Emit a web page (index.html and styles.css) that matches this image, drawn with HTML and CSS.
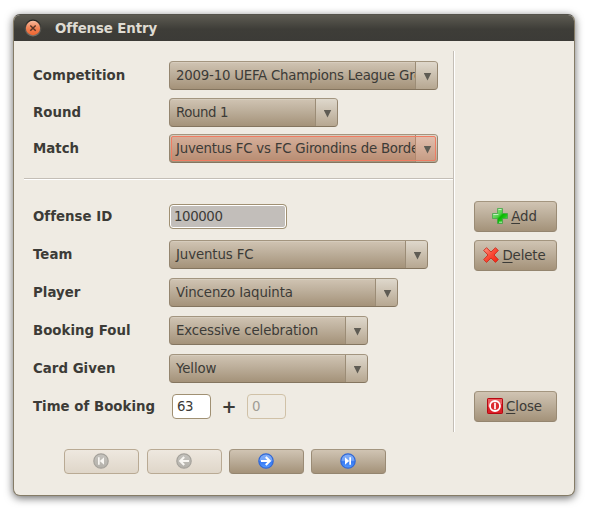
FILE: index.html
```html
<!DOCTYPE html>
<html lang="en">
<head>
<meta charset="utf-8">
<title>Offense Entry</title>
<link rel="stylesheet" href="styles.css">
</head>
<body>
<main class="window">
  <header class="titlebar">
    <svg class="window-close" width="18" height="18" viewBox="0 0 18 18">
      <defs><linearGradient id="orb" x1="0" y1="0" x2="0" y2="1"><stop offset="0" stop-color="#f7b99c"/><stop offset=".5" stop-color="#f18255"/><stop offset="1" stop-color="#ee6530"/></linearGradient>
      <linearGradient id="ring" x1="0" y1="0" x2="0" y2="1"><stop offset="0" stop-color="#20201d"/><stop offset="1" stop-color="#77756d"/></linearGradient></defs>
      <circle cx="9" cy="9" r="8.5" fill="url(#ring)"/><circle cx="9" cy="9" r="7.2" fill="url(#orb)"/>
      <path d="M6.3 6.5l5.4 5.2M11.7 6.5l-5.4 5.2" stroke="#5a3526" stroke-width="1.5"/>
    </svg>
    <h1 class="title">Offense Entry</h1>
  </header>
  <div class="content">
    <form class="form">
      <section class="match-fields">
        <div class="row"><label class="label">Competition</label><div class="combo w269"><span class="value long">2009-10 UEFA Champions League Group</span><span class="drop"><i class="arrow"></i></span></div></div>
        <div class="row"><label class="label">Round</label><div class="combo w169"><span class="value short">Round 1</span><span class="drop"><i class="arrow"></i></span></div></div>
        <div class="row row-match"><label class="label">Match</label><div class="combo w269 focused"><span class="value long">Juventus FC vs FC Girondins de Bordeaux</span><span class="drop"><i class="arrow"></i></span></div></div>
      </section>
      <section class="offense-fields">
        <div class="row"><label class="label">Offense ID</label><span class="entry readonly">100000</span></div>
        <div class="row"><label class="label">Team</label><div class="combo w259"><span class="value">Juventus FC</span><span class="drop"><i class="arrow"></i></span></div></div>
        <div class="row"><label class="label">Player</label><div class="combo w229"><span class="value">Vincenzo Iaquinta</span><span class="drop"><i class="arrow"></i></span></div></div>
        <div class="row"><label class="label">Booking Foul</label><div class="combo w199"><span class="value">Excessive celebration</span><span class="drop"><i class="arrow"></i></span></div></div>
        <div class="row"><label class="label">Card Given</label><div class="combo w199"><span class="value">Yellow</span><span class="drop"><i class="arrow"></i></span></div></div>
        <div class="row"><label class="label">Time of Booking</label><span class="entry minute">63</span><span class="plus">+</span><span class="entry minute disabled">0</span></div>
      </section>
    </form>
    <aside class="actions">
      <button class="button action add"><svg width="16" height="16" viewBox="0 0 16 16">
        <defs><linearGradient id="green" x1="0" y1="0" x2="1" y2="1"><stop offset="0" stop-color="#a8eaa2"/><stop offset=".45" stop-color="#4fd046"/><stop offset=".55" stop-color="#08b900"/><stop offset=".7" stop-color="#22c41a"/><stop offset="1" stop-color="#9be895"/></linearGradient></defs>
        <path d="M5.5.5h5v5h5v5h-5v5h-5v-5h-5v-5h5z" fill="url(#green)" stroke="#3fa045" stroke-width=".7"/><path d="M6.5 1.5h3M1.4 6.5h5M7 14.2h3" stroke="#d8f7d5" opacity=".8"/></svg><span><u>A</u>dd</span></button>
      <button class="button action delete"><svg width="16" height="16" viewBox="0 0 16 16">
        <defs><linearGradient id="red" x1="0" y1="0" x2="1" y2="1"><stop offset="0" stop-color="#ff9a88"/><stop offset=".5" stop-color="#fa4934"/><stop offset="1" stop-color="#f52211"/></linearGradient></defs>
        <path d="M3.5.7L8 5 12.5.7l2.8 2.8L11 8l4.3 4.6-2.8 2.8L8 11l-4.5 4.4-2.8-2.8L5 8 .7 3.5z" fill="url(#red)" stroke="#cb2b1d" stroke-width=".9" stroke-linejoin="round"/></svg><span><u>D</u>elete</span></button>
      <button class="button action close"><svg width="16" height="16" viewBox="0 0 16 16">
        <rect x=".5" y=".5" width="15" height="15" rx=".7" fill="#dc2027" stroke="#b50811"/><path d="M1 1h14v5Q8 5 1 9z" fill="#f17b7b" opacity=".65"/><circle cx="8" cy="8" r="5" fill="#dc2c30" stroke="#fff" stroke-width="1.8"/><path d="M8 4.8v6.4" stroke="#fff" stroke-width="1.7"/></svg><span><u>C</u>lose</span></button>
    </aside>
  </div>
  <nav class="pager">
    <svg class="defs" width="0" height="0"><defs>
      <linearGradient id="blue" x1="0" y1="0" x2="0" y2="1"><stop offset="0" stop-color="#82adf7"/><stop offset=".45" stop-color="#73a4f8"/><stop offset=".55" stop-color="#3478f4"/><stop offset="1" stop-color="#579cff"/></linearGradient>
      <linearGradient id="gray" x1="0" y1="0" x2="0" y2="1"><stop offset="0" stop-color="#c5c3be"/><stop offset="1" stop-color="#b4b1aa"/></linearGradient></defs></svg>
    <button class="button page inactive"><svg width="16" height="16" viewBox="0 0 16 16"><circle cx="8" cy="8" r="7.2" fill="url(#gray)" stroke="#a5a29b" stroke-width="1.2"/><path d="M5 4.2h1.7v7.6H5zM11 4.2v7.6L6.8 8z" fill="#f8f6f2"/></svg></button>
    <button class="button page inactive"><svg width="16" height="16" viewBox="0 0 16 16"><circle cx="8" cy="8" r="7.2" fill="url(#gray)" stroke="#a5a29b" stroke-width="1.2"/><path d="M13 8H4.5M8.2 4L4.2 8l4 4" fill="none" stroke="#f8f6f2" stroke-width="2.1"/></svg></button>
    <button class="button page"><svg width="16" height="16" viewBox="0 0 16 16"><circle cx="8" cy="8" r="7.2" fill="url(#blue)" stroke="#3168d5" stroke-width="1.2"/><path d="M3 8h8.5M7.8 4l4 4-4 4" fill="none" stroke="#fff" stroke-width="2.1"/></svg></button>
    <button class="button page"><svg width="16" height="16" viewBox="0 0 16 16"><circle cx="8" cy="8" r="7.2" fill="url(#blue)" stroke="#3168d5" stroke-width="1.2"/><path d="M9.3 4.2H11v7.6H9.3zM5 4.2v7.6L9.2 8z" fill="#fff"/></svg></button>
  </nav>
</main>
</body>
</html>
```
FILE: styles.css
```css
* { box-sizing: border-box; }
body {
  margin: 0;
  padding: 14px 16px 13px 13px;
  height: 509px;
  overflow: hidden;
  background: #fff;
  color: #3c3b37;
  font: 13.33px/16px "DejaVu Sans", sans-serif;
}
.window {
  width: 562px;
  height: 482px;
  border: 1px solid #857c67;
  border-top-color: #55534b;
  border-radius: 7px;
  background: #efebe3;
  overflow: hidden;
  box-shadow: 0 2px 8px rgba(0, 0, 0, .6);
}
.titlebar {
  display: flex;
  align-items: center;
  height: 26px;
  padding-left: 10px;
  background: linear-gradient(#5d5b52, #3e3d38 55%, #3c3b37);
}
.title {
  margin: 0 0 0 13px;
  padding-top: 2px;
  font-size: 13.33px;
  line-height: 16px;
  letter-spacing: -.1px;
  color: #dfdbd2;
}
.content { display: flex; height: 391px; padding: 10px 16px 0 10px; }
.form { width: 430px; height: 381px; border-right: 1px solid #c4beb6; box-shadow: 1px 0 #fff; }
.match-fields { height: 128px; padding: 10px 0 0 9px; border-bottom: 1px solid #c4beb6; box-shadow: 0 1px #fff; }
.match-fields .row { margin-bottom: 8px; }
.match-fields .row-match { margin-top: -1px; }
.offense-fields { display: flex; flex-direction: column; gap: 9px; padding: 23px 0 0 9px; }
.row { display: flex; align-items: center; height: 29px; }
.label { width: 136px; font-weight: bold; white-space: nowrap; letter-spacing: .02px; }
.combo {
  display: flex;
  height: 29px;
  border: 1px solid #94856f;
  border-color: #a3957f #94856f #84755f;
  border-radius: 4px;
  background: linear-gradient(#d0c4b3, #bcae9a 45%, #a49279);
  box-shadow: inset 0 1px rgba(255, 255, 255, .15);
  position: relative;
  overflow: hidden;
}
.value { flex: 1; min-width: 0; padding-left: 6px; line-height: 27px; letter-spacing: -.12px; overflow: hidden; white-space: nowrap; }
.long { letter-spacing: -.22px; }
.short { letter-spacing: -.4px; }
.drop {
  width: 22px;
  border-left: 1px solid #9b8c76;
  background: linear-gradient(#dfd8cc, #b6a791);
  display: grid;
  place-items: center;
  padding: 2px 0 0 2px;
}
.arrow { width: 8px; height: 8px; background: #5f5c54; clip-path: polygon(0 0, 100% 0, 50% 100%); }
.focused::after {
  content: "";
  position: absolute;
  inset: 1px;
  border: 1px solid #f07c62;
  border-radius: 2px;
  background: rgba(240, 119, 88, .25);
}
.focused .value, .focused .arrow { position: relative; z-index: 1; }
.w269 { width: 269px; }
.w259 { width: 259px; }
.w229 { width: 229px; }
.w199 { width: 199px; }
.w169 { width: 169px; }
.entry {
  height: 25px;
  padding-left: 4px;
  border: 1px solid #a09073;
  border-radius: 4px;
  line-height: 23px;
  letter-spacing: -.4px;
  background: #fff;
}
.readonly { width: 118px; background: #c2beba; box-shadow: inset 0 0 0 1px #fff; }
.minute { width: 39px; margin-left: 3px; }
.disabled { margin-left: 0; background: #efebe3; border-color: #d0c1a7; color: #a09c95; }
.plus { width: 36px; text-align: center; font-size: 18px; font-weight: bold; }
.actions { display: flex; flex-direction: column; padding: 150px 0 0 20px; }
.button {
  display: flex;
  align-items: center;
  justify-content: center;
  padding: 0;
  border: 1px solid #94856f;
  border-color: #a3957f #9a8b75 #94856f;
  border-radius: 4px;
  background: linear-gradient(#d0c4b3, #bcae9a 45%, #a49279);
  color: inherit;
  font: inherit;
}
.action { width: 83px; height: 31px; gap: 3px; padding: 0 2px 0 0; letter-spacing: -.1px; }
.action svg { margin-top: -1px; }
.action u { text-underline-offset: 2px; text-decoration-thickness: 1px; }
.delete { margin-top: 8px; }
.close { margin-top: 120px; }
.pager { display: flex; gap: 7px; padding: 17px 0 0 50px; }
.defs { position: absolute; }
.page { width: 75px; height: 25px; padding: 0 1px 1px 0; }
.page:nth-of-type(1) { margin-right: 1px; }
.inactive { border-color: #b9aa94; background: linear-gradient(#eee8df, #dfd6c9); }
```
